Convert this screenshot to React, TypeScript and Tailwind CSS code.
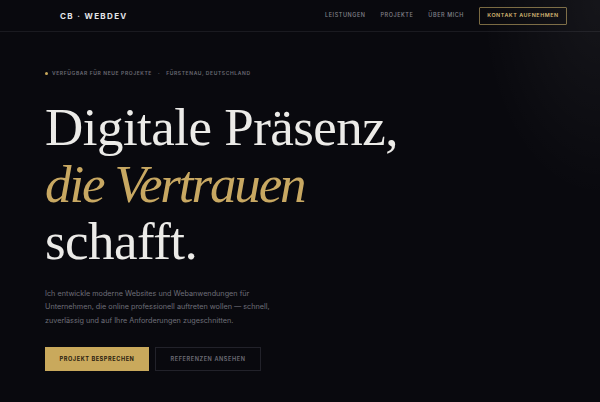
export default function App() {
  return (
    <div className="relative h-[402px] w-[600px] overflow-hidden bg-[#09090e] font-['Inter',sans-serif]">
      <div className="pointer-events-none absolute right-0 top-0 h-[200px] w-[120px] bg-[radial-gradient(ellipse_at_top_right,rgba(255,255,255,0.05),transparent_70%)]" />
      <header className="flex h-[32px] items-center justify-between border-b border-[#1a1a20] pl-[60px] pr-[33px]">
        <span className="text-[8px] font-bold tracking-[0.17em] text-[#e4e4e8]">CB · WEBDEV</span>
        <nav className="flex items-center gap-[15px] whitespace-nowrap">
          <a className="text-[5.5px] font-medium tracking-[0.1em] text-[#84848d]">LEISTUNGEN</a>
          <a className="text-[5.5px] font-medium tracking-[0.1em] text-[#84848d]">PROJEKTE</a>
          <a className="text-[5.5px] font-medium tracking-[0.1em] text-[#84848d]">ÜBER MICH</a>
          <a className="flex h-[18px] w-[88px] items-center justify-center rounded-[1px] border border-[#7a6a42] text-[5.4px] font-semibold tracking-[0.1em] text-[#d4b670]">
            KONTAKT AUFNEHMEN
          </a>
        </nav>
      </header>
      <main className="flex flex-col pl-[45px] pt-[38px]">
        <div className="flex items-center gap-[4px] whitespace-nowrap text-[5px] font-semibold tracking-[0.12em] text-[#6a6a74]">
          <span className="h-[3px] w-[3px] rounded-full bg-[#c9a95c]" />
          <span>VERFÜGBAR FÜR NEUE PROJEKTE</span>
          <span className="px-[2px]">·</span>
          <span>FÜRSTENAU, DEUTSCHLAND</span>
        </div>
        <h1 className="mt-[21px] font-['Liberation_Serif',serif] text-[53px] font-normal leading-[57px] tracking-[-0.01em] text-[#ecebe8]">
          Digitale Präsenz,
          <br />
          <em className="tracking-[-0.04em] text-[#c8a862]">die Vertrauen</em>
          <br />
          schafft.
        </h1>
        <p className="mt-[17px] w-[228px] text-[7.25px] leading-[13.5px] text-[#6e6e78]">
          Ich entwickle moderne Websites und Webanwendungen für Unternehmen, die online professionell auftreten wollen — schnell, zuverlässig und auf Ihre Anforderungen zugeschnitten.
        </p>
        <div className="mt-[20px] flex gap-[6px]">
          <button className="flex h-[24px] w-[104px] items-center justify-center bg-[#c9a95c] text-[5.6px] font-bold tracking-[0.1em] text-[#2a2110]">
            PROJEKT BESPRECHEN
          </button>
          <button className="flex h-[24px] w-[106px] items-center justify-center border border-[#22222a] text-[5.6px] font-semibold tracking-[0.1em] text-[#6e6e78]">
            REFERENZEN ANSEHEN
          </button>
        </div>
      </main>
    </div>
  );
}
